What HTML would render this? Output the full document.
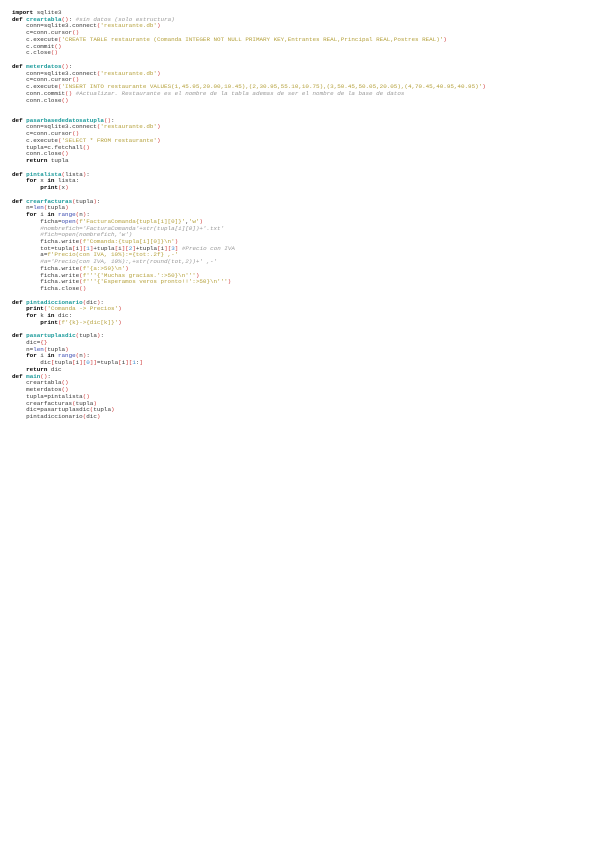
<!DOCTYPE html>
<html><head><meta charset="utf-8"><style>
html,body{margin:0;padding:0;background:#fff;width:600px;height:848px;overflow:hidden}
pre{position:absolute;left:12px;top:10px;margin:0;font-family:"Liberation Mono",monospace;font-size:5.9px;line-height:6.73px;color:#333}
.k{font-weight:bold;color:#000}
.f{font-weight:bold;color:#1a9a9a}
.s{color:#b5a13c}
.c{color:#999;font-style:italic}
.p{color:#d04040}
.b{color:#3a4ab0}
.n{color:#3a8ad0}
</style></head><body><pre><span class="k">import</span> sqlite3
<span class="k">def</span> <span class="f">creartabla</span><span class="p">()</span>: <span class="c">#sin datos (solo estructura)</span>
    conn=sqlite3.connect<span class="p">(</span><span class="s">'restaurante.db'</span><span class="p">)</span>
    c=conn.cursor<span class="p">()</span>
    c.execute<span class="p">(</span><span class="s">'CREATE TABLE restaurante (Comanda INTEGER NOT NULL PRIMARY KEY,Entrantes REAL,Principal REAL,Postres REAL)'</span><span class="p">)</span>
    c.commit<span class="p">()</span>
    c.close<span class="p">()</span>

<span class="k">def</span> <span class="f">meterdatos</span><span class="p">()</span>:
    conn=sqlite3.connect<span class="p">(</span><span class="s">'restaurante.db'</span><span class="p">)</span>
    c=conn.cursor<span class="p">()</span>
    c.execute<span class="p">(</span><span class="s">'INSERT INTO restaurante VALUES(1,45.95,20.00,10.45),(2,30.95,55.10,10.75),(3,50.45,50.05,20.05),(4,70.45,40.95,40.95)'</span><span class="p">)</span>
    conn.commit<span class="p">()</span> <span class="c">#Actualizar. Restaurante es el nombre de la tabla ademas de ser el nombre de la base de datos</span>
    conn.close<span class="p">()</span>


<span class="k">def</span> <span class="f">pasarbasededatosatupla</span><span class="p">()</span>:
    conn=sqlite3.connect<span class="p">(</span><span class="s">'restaurante.db'</span><span class="p">)</span>
    c=conn.cursor<span class="p">()</span>
    c.execute<span class="p">(</span><span class="s">'SELECT * FROM restaurante'</span><span class="p">)</span>
    tupla=c.fetchall<span class="p">()</span>
    conn.close<span class="p">()</span>
    <span class="k">return</span> tupla

<span class="k">def</span> <span class="f">pintalista</span><span class="p">(</span>lista<span class="p">)</span>:
    <span class="k">for</span> x <span class="k">in</span> lista:
        <span class="k">print</span><span class="p">(</span>x<span class="p">)</span>

<span class="k">def</span> <span class="f">crearfacturas</span><span class="p">(</span>tupla<span class="p">)</span>:
    n=<span class="b">len</span><span class="p">(</span>tupla<span class="p">)</span>
    <span class="k">for</span> i <span class="k">in</span> <span class="b">range</span><span class="p">(</span>n<span class="p">)</span>:
        ficha=<span class="b">open</span><span class="p">(</span><span class="s">f'FacturaComanda{tupla[i][0]}'</span>,<span class="s">'w'</span><span class="p">)</span>
        <span class="c">#nombrefich='FacturaComanda'+str(tupla[i][0])+'.txt'</span>
        <span class="c">#fich=open(nombrefich,'w')</span>
        ficha.write<span class="p">(</span><span class="s">f'Comanda:{tupla[i][0]}\n'</span><span class="p">)</span>
        tot=tupla<span class="p">[</span>i<span class="p">][</span><span class="n">1</span><span class="p">]</span>+tupla<span class="p">[</span>i<span class="p">][</span><span class="n">2</span><span class="p">]</span>+tupla<span class="p">[</span>i<span class="p">][</span><span class="n">3</span><span class="p">]</span> <span class="c">#Precio con IVA</span>
        a=<span class="s">f'Precio(con IVA, 10%):={tot:.2f} ,-'</span>
        <span class="c">#a='Precio(con IVA, 10%):,+str(round(tot,2))+' ,-'</span>
        ficha.write<span class="p">(</span><span class="s">f'{a:&gt;50}\n'</span><span class="p">)</span>
        ficha.write<span class="p">(</span><span class="s">f'''{'Muchas gracias.':&gt;50}\n'''</span><span class="p">)</span>
        ficha.write<span class="p">(</span><span class="s">f'''{'Esperamos veros pronto!!':&gt;50}\n'''</span><span class="p">)</span>
        ficha.close<span class="p">()</span>

<span class="k">def</span> <span class="f">pintadiccionario</span><span class="p">(</span>dic<span class="p">)</span>:
    <span class="k">print</span><span class="p">(</span><span class="s">'Comanda -&gt; Precios'</span><span class="p">)</span>
    <span class="k">for</span> k <span class="k">in</span> dic:
        <span class="k">print</span><span class="p">(</span><span class="s">f'{k}-&gt;{dic[k]}'</span><span class="p">)</span>

<span class="k">def</span> <span class="f">pasartuplasdic</span><span class="p">(</span>tupla<span class="p">)</span>:
    dic=<span class="p">{}</span>
    n=<span class="b">len</span><span class="p">(</span>tupla<span class="p">)</span>
    <span class="k">for</span> i <span class="k">in</span> <span class="b">range</span><span class="p">(</span>n<span class="p">)</span>:
        dic<span class="p">[</span>tupla<span class="p">[</span>i<span class="p">][</span><span class="n">0</span><span class="p">]]</span>=tupla<span class="p">[</span>i<span class="p">][</span><span class="n">1</span>:<span class="p">]</span>
    <span class="k">return</span> dic
<span class="k">def</span> <span class="f">main</span><span class="p">()</span>:
    creartabla<span class="p">()</span>
    meterdatos<span class="p">()</span>
    tupla=pintalista<span class="p">()</span>
    crearfacturas<span class="p">(</span>tupla<span class="p">)</span>
    dic=pasartuplasdic<span class="p">(</span>tupla<span class="p">)</span>
    pintadiccionario<span class="p">(</span>dic<span class="p">)</span></pre></body></html>
